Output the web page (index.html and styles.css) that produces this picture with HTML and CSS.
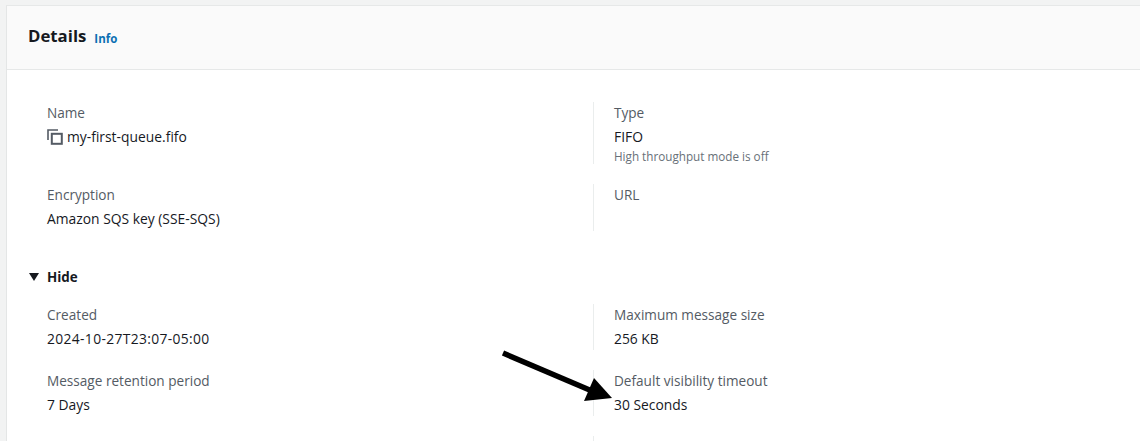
FILE: index.html
```html
<!DOCTYPE html>
<html lang="en">

<head>
    <meta charset="UTF-8">
    <meta name="viewport" content="width=device-width, initial-scale=1.0">
    <title>Details</title>
    <link rel="stylesheet" href="styles.css">
</head>

<body>
    <div class="card">
        <div class="card_head">
            <h2>Details</h2>
            <a href="#" class="info">Info</a>
        </div>
        <div class="card_body">
            <div class="grid grid_top">
                <div class="cell cell_first">
                    <div class="label">Name</div>
                    <div class="value copy">
                        <svg class="copy_icon" width="16" height="16" viewBox="0 0 16 16">
                            <path d="M1 11V1h10" fill="none" stroke="#545b64" stroke-width="1.6"/>
                            <rect x="4.8" y="4.8" width="10" height="10" fill="none" stroke="#545b64" stroke-width="2"/>
                        </svg>
                        <span>my-first-queue.fifo</span>
                    </div>
                </div>
                <div class="cell cell_last">
                    <div class="label">Type</div>
                    <div class="value">FIFO</div>
                    <div class="note">High throughput mode is off</div>
                </div>
                <div class="cell cell_first">
                    <div class="label">Encryption</div>
                    <div class="value">Amazon SQS key (SSE-SQS)</div>
                </div>
                <div class="cell cell_last">
                    <div class="label">URL</div>
                </div>
            </div>

            <div class="toggle">
                <svg class="caret" width="10" height="8" viewBox="0 0 10 8"><path d="M0 0h10L5 8z" fill="#16191f"/></svg>
                <span>Hide</span>
            </div>

            <div class="grid grid_more">
                <div class="cell cell_first">
                    <div class="label">Created</div>
                    <div class="value value_date">2024-10-27T23:07-05:00</div>
                </div>
                <div class="cell cell_last">
                    <div class="label">Maximum message size</div>
                    <div class="value">256 KB</div>
                </div>
                <div class="cell cell_first">
                    <div class="label">Message retention period</div>
                    <div class="value">7 Days</div>
                </div>
                <div class="cell cell_last">
                    <div class="label">Default visibility timeout</div>
                    <div class="value">30 Seconds</div>
                </div>
                <div class="cell cell_stub"></div>
                <div class="cell cell_last"></div>
            </div>
        </div>
    </div>

    <!-- arrow drawn over the screenshot -->
    <svg class="arrow" width="1140" height="441" viewBox="0 0 1140 441">
        <path d="M503 353L592 391" stroke="#000" stroke-width="5.5" fill="none"/>
        <path d="M594 378L612 398L584 401z" fill="#000"/>
    </svg>
</body>

</html>
```

FILE: styles.css
```css
* {
    margin: 0;
    padding: 0;
    box-sizing: border-box;
}

html,
body {
    height: 441px;
    overflow: hidden;
}

body {
    position: relative;
    padding: 5px 0 0 6px;
    background-color: #f2f3f3;
    font-family: "Open Sans", "Noto Sans", sans-serif;
    font-size: 14px;
    line-height: 22px;
    color: #16191f;
}

.card {
    height: 436px;
    overflow: hidden;
    border-top: 1px solid #e6e8e8;
    border-left: 1px solid #e4e6e6;
    background-color: #fff;
}

.card_head {
    display: flex;
    align-items: baseline;
    gap: 8px;
    height: 64px;
    padding: 17px 20px 0 21px;
    border-bottom: 1px solid #e6e8e8;
    background-color: #fafafa;
}

.card_head h2 {
    font-size: 16.8px;
    line-height: 26px;
    font-weight: 700;
}

.info {
    position: relative;
    top: 1px;
    font-size: 11.5px;
    font-weight: 700;
    text-decoration: none;
    color: #0b6fb3;
}

.card_body {
    padding: 32px 0 0 20px;
}

.grid {
    display: grid;
    grid-template-columns: 566px 1fr;
    row-gap: 20px;
}

.cell {
    min-height: 47px;
}

.grid_more .cell {
    min-height: 46px;
}

.cell_first {
    padding-left: 20px;
}

.cell_last {
    padding-left: 20px;
    border-left: 1px solid #eaeded;
}

.label {
    font-size: 13.6px;
    color: #545b64;
}

.value {
    margin-top: 2px;
    font-size: 13.85px;
}

.value_date {
    letter-spacing: 0.35px;
}

.copy {
    display: flex;
    align-items: center;
    gap: 4px;
}

.copy_icon {
    flex: none;
}

.note {
    font-size: 11.7px;
    line-height: 16px;
    color: #687078;
}

.toggle {
    display: flex;
    align-items: center;
    gap: 8px;
    margin: 35px 0 16px;
    padding-left: 2px;
    font-size: 13.4px;
    font-weight: 700;
}

.arrow {
    position: absolute;
    top: 0;
    left: 0;
}
```
